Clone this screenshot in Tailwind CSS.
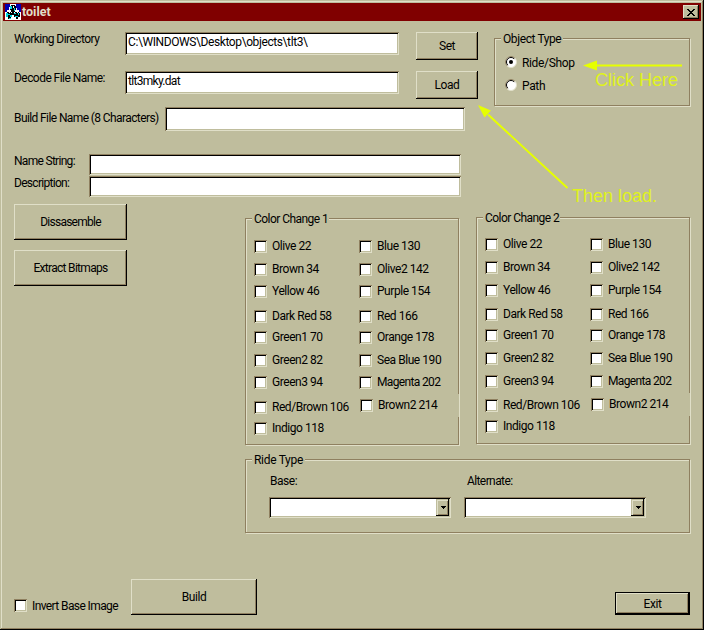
<!DOCTYPE html>
<html lang="en">
<head>
<meta charset="utf-8">
<title>toilet</title>
<script src="https://cdn.jsdelivr.net/npm/@tailwindcss/browser@4"></script>
</head>
<body class="bg-[#bfbd9d]">
<main class="relative flex h-[630px] w-[704px] flex-col overflow-hidden border-r border-b border-black bg-[#bfbd9d] font-['Roboto','Liberation_Sans',sans-serif] text-[12px] leading-[14px] tracking-[-0.45px] whitespace-nowrap text-black shadow-[inset_1px_1px_0_#bfbd9d,inset_-1px_-1px_0_#8f8060,inset_2px_2px_0_#e0dfc8]">
  <header class="mt-[3px] mr-[2px] ml-[3px] flex h-[18px] shrink-0 items-center bg-[#800000] pr-[2px] pl-[2px]">
    <svg class="h-4 w-4" viewBox="0 0 16 16" shape-rendering="crispEdges">
      <path fill="#fff" d="M0 0h16v16H0z"/>
      <path fill="#0000b0" d="M0 0h5v3H4v3H2v2H0zM11 0h5v8h-2V6h-2V4h-1z"/>
      <path fill="#000" d="M6 1h4v1h1v4h-1v2H6V6H5V2h1zM2 8h4v1h1v4H6v2H3v-2H1V9h1zM10 8h4v1h1v4h-2v2h-2v-2H9V9h1zM7 8h2v3H7z"/>
      <path fill="#00d8e0" d="M5 2h2v3H5zM9 4h1v3H9zM1 9h2v1h2v1H3v2H1zM5 11h2v2H5zM9 9h2v1H9zM10 12h3v1h-3zM13 9h1v2h-1zM4 14h2v1H4z"/>
      <path fill="#fff" d="M8 2h1v2H8zM4 8h1v1H4zM12 8h1v1h-1zM7 12h2v4H7z"/>
    </svg>
    <h1 class="ml-px text-[12.5px] font-bold tracking-[0px] text-[#e0dfc8]">toilet</h1>
    <button class="ml-auto flex h-[14px] w-4 items-center justify-center bg-[#bfbd9d] shadow-[inset_-1px_-1px_0_#000,inset_1px_1px_0_#e0dfc8,inset_-2px_-2px_0_#8f8060]">
      <svg class="h-[7px] w-2" viewBox="0 0 8 7" shape-rendering="crispEdges"><path d="M0 0h2v1h1v1h2V1h1V0h2v1H7v1H6v1H5v1h1v1h1v1h1v1H6V6H5V5H3v1H2v1H0V6h1V5h1V4h1V3H2V2H1V1H0z"/></svg>
    </button>
  </header>

  <div class="flex h-[183px] shrink-0">
    <section class="w-[494px] pl-[14px]">
      <div class="mt-[11px] flex h-[28px] items-start">
        <label class="w-[111px] tracking-[-0.55px]">Working Directory</label>
        <div class="h-[23px] w-[274px] bg-white pt-[3px] pl-[3px] tracking-[-0.4px] shadow-[inset_1px_1px_0_#8f8060,inset_-1px_-1px_0_#e0dfc8,inset_2px_2px_0_#000,inset_-2px_-2px_0_#bfbd9d]">C:\WINDOWS\Desktop\objects\tlt3\</div>
        <button class="ml-[17px] h-[28px] w-[62px] shadow-[inset_-1px_-1px_0_#000,inset_1px_1px_0_#e0dfc8,inset_-2px_-2px_0_#8f8060]">Set</button>
      </div>
      <div class="mt-[11px] flex h-[28px] items-start">
        <label class="w-[111px] tracking-[-0.55px]">Decode File Name:</label>
        <div class="h-[23px] w-[274px] bg-white pt-[3px] pl-[3px] tracking-[-0.7px] shadow-[inset_1px_1px_0_#8f8060,inset_-1px_-1px_0_#e0dfc8,inset_2px_2px_0_#000,inset_-2px_-2px_0_#bfbd9d]">tlt3mky.dat</div>
        <button class="ml-[17px] h-[28px] w-[62px] shadow-[inset_-1px_-1px_0_#000,inset_1px_1px_0_#e0dfc8,inset_-2px_-2px_0_#8f8060]">Load</button>
      </div>
      <div class="mt-[8px] flex h-[24px] items-start">
        <label class="w-[151px] pt-1 tracking-[-0.6px]">Build File Name (8 Characters)</label>
        <div class="h-6 w-[300px] bg-white shadow-[inset_1px_1px_0_#8f8060,inset_-1px_-1px_0_#e0dfc8,inset_2px_2px_0_#000,inset_-2px_-2px_0_#bfbd9d]"></div>
      </div>
      <div class="mt-[23px] flex h-[21px] items-start">
        <label class="w-[75px] tracking-[-0.7px]">Name String:</label>
        <div class="h-[21px] w-[372px] bg-white shadow-[inset_1px_1px_0_#8f8060,inset_-1px_-1px_0_#e0dfc8,inset_2px_2px_0_#000,inset_-2px_-2px_0_#bfbd9d]"></div>
      </div>
      <div class="mt-px flex h-[21px] items-start">
        <label class="w-[75px] tracking-[-0.7px]">Description:</label>
        <div class="h-[21px] w-[372px] bg-white shadow-[inset_1px_1px_0_#8f8060,inset_-1px_-1px_0_#e0dfc8,inset_2px_2px_0_#000,inset_-2px_-2px_0_#bfbd9d]"></div>
      </div>
    </section>
    <fieldset class="mt-[10px] h-[76px] w-[197px]">
      <div class="mt-[7px] h-[68px] w-[196px] border border-[#8f8060] shadow-[1px_1px_0_#e0dfc8,inset_1px_1px_0_#e0dfc8]">
        <div class="-mt-[7px] ml-[6px] w-[62px] bg-[#bfbd9d] pl-[2px] tracking-[-0.4px]">Object Type</div>
        <label class="mt-[10px] ml-[10px] flex h-[14px] items-center gap-[5px] tracking-[-0.35px]">
          <svg class="-mt-[2px] h-3 w-3" viewBox="0 0 12 12"><circle cx="6" cy="6" r="5.5" fill="#fff" stroke="#e0dfc8"/><path d="M2.1 9.9A5.5 5.5 0 0 1 9.900 2.100" fill="none" stroke="#8f8060"/><path d="M2.800 9.200A4.500 4.500 0 0 1 9.200 2.800" fill="none" stroke="#000"/><circle cx="6" cy="6" r="2"/></svg>Ride/Shop
        </label>
        <label class="mt-[9px] ml-[10px] flex h-[14px] items-center gap-[5px] tracking-[-0.35px]">
          <svg class="-mt-[2px] h-3 w-3" viewBox="0 0 12 12"><circle cx="6" cy="6" r="5.5" fill="#fff" stroke="#e0dfc8"/><path d="M2.100 9.900A5.500 5.500 0 0 1 9.900 2.100" fill="none" stroke="#8f8060"/><path d="M2.800 9.200A4.500 4.500 0 0 1 9.200 2.800" fill="none" stroke="#000"/></svg>Path
        </label>
      </div>
    </fieldset>
  </div>

  <div class="flex h-[375px] shrink-0 pl-[14px]">
    <section class="flex w-[231px] flex-col items-start">
      <button class="h-9 w-[113px] tracking-[-0.75px] shadow-[inset_-1px_-1px_0_#000,inset_1px_1px_0_#e0dfc8,inset_-2px_-2px_0_#8f8060]">Dissasemble</button>
      <button class="mt-[10px] h-9 w-[113px] tracking-[-0.7px] shadow-[inset_-1px_-1px_0_#000,inset_1px_1px_0_#e0dfc8,inset_-2px_-2px_0_#8f8060]">Extract Bitmaps</button>
    </section>
    <section>
      <div class="flex h-[255px] items-start pt-[13px]">
        <div class="mt-px flex h-[227px] w-[214px] border border-[#8f8060] shadow-[1px_1px_0_#e0dfc8,inset_1px_1px_0_#e0dfc8]">
          <div class="w-[212px] shrink-0">
            <div class="-mt-[7px] ml-[6px] w-[77px] bg-[#bfbd9d] pl-[2px] tracking-[-0.55px]">Color Change 1</div>
            <div class="mt-[14px] flex pl-2">
              <div class="w-[105px]" data-tops="240,263,285,310,331,354,376,401,422" data-names="Olive 22,Brown 34,Yellow 46,Dark Red 58,Green1 70,Green2 82,Green3 94,Red/Brown 106,Indigo 118"></div>
              <div data-tops="240,263,285,310,331,354,376,399" data-names="Blue 130,Olive2 142,Purple 154,Red 166,Orange 178,Sea Blue 190,Magenta 202,Brown2 214"></div>
            </div>
          </div>
          <div class="mt-[175px] h-[23px] w-px shrink-0 bg-[#bfbd9d]"></div>
        </div>
        <div class="ml-[17px] flex h-[227px] w-[214px] border border-[#8f8060] shadow-[1px_1px_0_#e0dfc8,inset_1px_1px_0_#e0dfc8]">
          <div class="w-[212px] shrink-0">
            <div class="-mt-[7px] ml-[6px] w-[77px] bg-[#bfbd9d] pl-[2px] tracking-[-0.55px]">Color Change 2</div>
            <div class="mt-[13px] flex pl-2">
              <div class="w-[105px]" data-tops="238,261,284,308,329,352,375,399,420" data-names="Olive 22,Brown 34,Yellow 46,Dark Red 58,Green1 70,Green2 82,Green3 94,Red/Brown 106,Indigo 118"></div>
              <div data-tops="238,261,284,308,329,352,375,398" data-names="Blue 130,Olive2 142,Purple 154,Red 166,Orange 178,Sea Blue 190,Magenta 202,Brown2 214"></div>
            </div>
          </div>
          <div class="mt-[175px] h-[23px] w-px shrink-0 bg-[#bfbd9d]"></div>
        </div>
      </div>
      <div class="h-[74px] w-[445px] border border-[#8f8060] shadow-[1px_1px_0_#e0dfc8,inset_1px_1px_0_#e0dfc8]">
        <div class="-mt-[7px] ml-[6px] w-[53px] bg-[#bfbd9d] pl-[2px] tracking-[-0.3px]">Ride Type</div>
        <div class="mt-[7px] flex gap-[13px] pl-[23px]">
          <div class="w-[183px]">
            <div class="pl-px">Base:</div>
            <div class="mt-[9px] flex h-[21px] w-[182px] justify-end bg-white py-[2px] pr-[2px] shadow-[inset_1px_1px_0_#8f8060,inset_-1px_-1px_0_#e0dfc8,inset_2px_2px_0_#000,inset_-2px_-2px_0_#bfbd9d]">
              <button class="flex w-[13px] items-center justify-center bg-[#bfbd9d] pl-px shadow-[inset_-1px_-1px_0_#000,inset_1px_1px_0_#bfbd9d,inset_2px_2px_0_#e0dfc8,inset_-2px_-2px_0_#8f8060]"><svg class="h-[3px] w-[5px]" viewBox="0 0 5 3" shape-rendering="crispEdges"><path d="M0 0h5v1H4v1H3v1H2V2H1V1H0z"/></svg></button>
            </div>
          </div>
          <div class="-ml-px w-[183px]">
            <div class="pl-[3px] tracking-[-0.6px]">Alternate:</div>
            <div class="mt-[9px] flex h-[21px] w-[182px] justify-end bg-white py-[2px] pr-[2px] shadow-[inset_1px_1px_0_#8f8060,inset_-1px_-1px_0_#e0dfc8,inset_2px_2px_0_#000,inset_-2px_-2px_0_#bfbd9d]">
              <button class="flex w-[13px] items-center justify-center bg-[#bfbd9d] pl-px shadow-[inset_-1px_-1px_0_#000,inset_1px_1px_0_#bfbd9d,inset_2px_2px_0_#e0dfc8,inset_-2px_-2px_0_#8f8060]"><svg class="h-[3px] w-[5px]" viewBox="0 0 5 3" shape-rendering="crispEdges"><path d="M0 0h5v1H4v1H3v1H2V2H1V1H0z"/></svg></button>
            </div>
          </div>
        </div>
      </div>
    </section>
  </div>

  <footer class="flex items-start pl-[14px]">
    <label class="mt-5 flex w-[117px] items-start gap-[5px] tracking-[-0.6px]"><span class="h-[13px] w-[13px] bg-white shadow-[inset_1px_1px_0_#8f8060,inset_-1px_-1px_0_#e0dfc8,inset_2px_2px_0_#000,inset_-2px_-2px_0_#bfbd9d]"></span>Invert Base Image</label>
    <button class="h-9 w-[126px] shadow-[inset_-1px_-1px_0_#000,inset_1px_1px_0_#e0dfc8,inset_-2px_-2px_0_#8f8060]">Build</button>
    <button class="mt-[13px] ml-[358px] h-[23px] w-[75px] border border-black shadow-[inset_-1px_-1px_0_#000,inset_1px_1px_0_#e0dfc8,inset_-2px_-2px_0_#8f8060]">Exit</button>
  </footer>

  <svg class="pointer-events-none absolute top-0 left-0 h-[630px] w-[703px]" viewBox="0 0 703 630">
    <path d="M595 65.500H682M488 114.500L567.500 188" fill="none" stroke="#e6ff00" stroke-width="2"/>
    <path d="M583 65.500L597 60.500V70.500zM478 105L491 110.500L484.500 117.500z" fill="#e6ff00"/>
  </svg>
  <p class="absolute top-[70px] left-[595px] font-['Liberation_Sans',sans-serif] text-[18px] leading-[20px] tracking-[0px] text-[#dff21c]">Click Here</p>
  <p class="absolute top-[186px] left-[572px] font-['Liberation_Sans',sans-serif] text-[18px] leading-[20px] tracking-[0px] text-[#dff21c]">Then load.</p>
</main>
<script>
  // Builds each colour column; row heights come from the dialog's own row positions.
  document.querySelectorAll('[data-tops]').forEach(function (col) {
    var tops = col.dataset.tops.split(',').map(Number);
    col.dataset.names.split(',').forEach(function (name, i) {
      var row = document.createElement('label');
      row.className = 'flex items-start gap-[5px]' + (name === 'Brown2 214' ? ' pl-px' : '') + (name === 'Magenta 202' ? ' tracking-[-0.65px]' : '');
      row.style.height = ((tops[i + 1] || tops[i] + 14) - tops[i]) + 'px';
      var box = document.createElement('span');
      box.className = 'h-[13px] w-[13px] bg-white shadow-[inset_1px_1px_0_#8f8060,inset_-1px_-1px_0_#e0dfc8,inset_2px_2px_0_#000,inset_-2px_-2px_0_#bfbd9d]';
      var text = document.createElement('span');
      text.className = '-mt-px';
      text.textContent = name;
      row.append(box, text);
      col.append(row);
    });
  });
</script>
</body>
</html>
